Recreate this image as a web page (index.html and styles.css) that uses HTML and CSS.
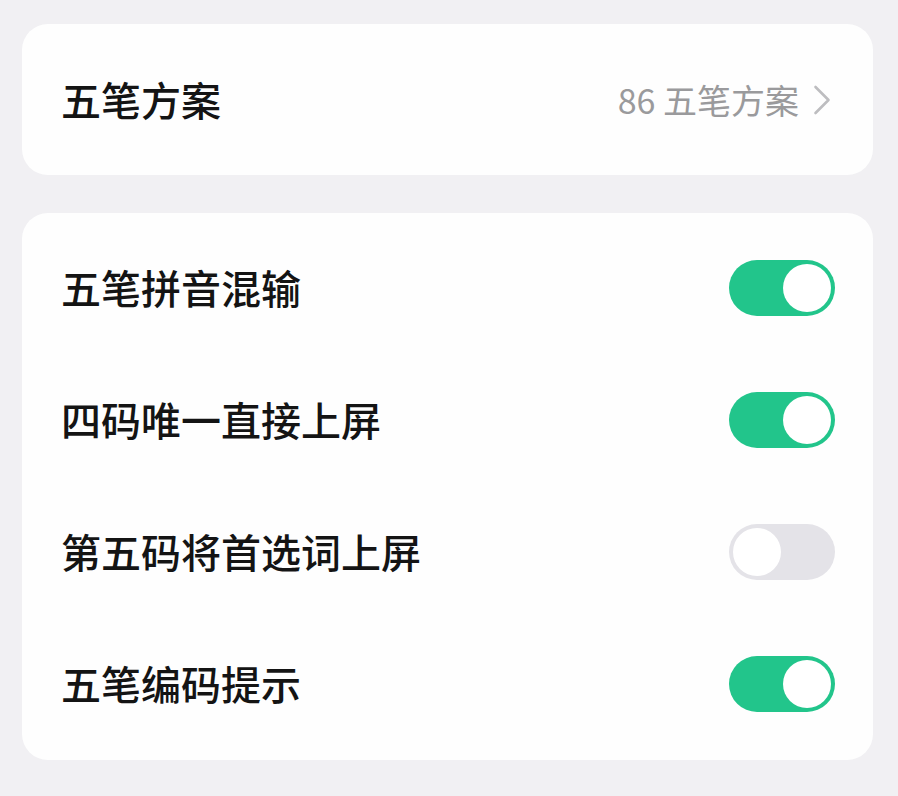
FILE: index.html
```html
<!DOCTYPE html>
<html lang="zh-CN">
<head>
<meta charset="utf-8">
<link rel="stylesheet" href="styles.css">
</head>
<body>
<div class="page">
  <div class="card card-top">
    <div class="row row-top">
      <span class="label">五笔方案</span>
      <span class="value">86 五笔方案
        <svg class="chev" width="18" height="30" viewBox="0 0 18 30"><path d="M2.5 2 L15.5 15 L2.5 28" fill="none" stroke="#bdbdc0" stroke-width="2.6" stroke-linecap="round" stroke-linejoin="round"/></svg>
      </span>
    </div>
  </div>
  <div class="card card-list">
    <div class="row"><span class="label">五笔拼音混输</span><span class="switch on"><span class="knob"></span></span></div>
    <div class="row"><span class="label">四码唯一直接上屏</span><span class="switch on"><span class="knob"></span></span></div>
    <div class="row"><span class="label">第五码将首选词上屏</span><span class="switch off"><span class="knob"></span></span></div>
    <div class="row"><span class="label">五笔编码提示</span><span class="switch on"><span class="knob"></span></span></div>
  </div>
</div>
</body>
</html>
```
FILE: styles.css
```css
html, body {
  margin: 0;
  padding: 0;
  background: #f1f0f3;
  font-family: "Noto Sans CJK SC", "Noto Sans", sans-serif;
}
.page {
  padding: 24px 25px 0 22px;
  display: flex;
  flex-direction: column;
  gap: 38px;
}
.card {
  background: #fefefe;
  border-radius: 26px;
}
.card-top {
  height: 151px;
  display: flex;
  align-items: center;
}
.row {
  display: flex;
  align-items: center;
  justify-content: space-between;
  padding: 0 38px 0 39px;
  height: 132px;
}
.row-top {
  width: 100%;
  padding: 0 42px 0 39px;
  height: auto;
}
.label {
  font-size: 40px;
  line-height: 1;
  font-weight: 500;
  color: #141414;
  position: relative;
  top: -1px;
}
.value {
  display: flex;
  align-items: center;
  font-size: 34px;
  line-height: 1;
  color: #9a9a9c;
  gap: 14px;
}
.chev { display: block; }
.card-list {
  padding: 9px 0 10px;
}
.switch {
  width: 106px;
  height: 56px;
  border-radius: 28px;
  box-sizing: border-box;
  padding: 4px;
  display: flex;
  align-items: center;
}
.switch.on {
  background: #22c58b;
  justify-content: flex-end;
}
.switch.off {
  background: #e4e3e8;
  justify-content: flex-start;
}
.knob {
  width: 48px;
  height: 48px;
  border-radius: 50%;
  background: #ffffff;
}
```
